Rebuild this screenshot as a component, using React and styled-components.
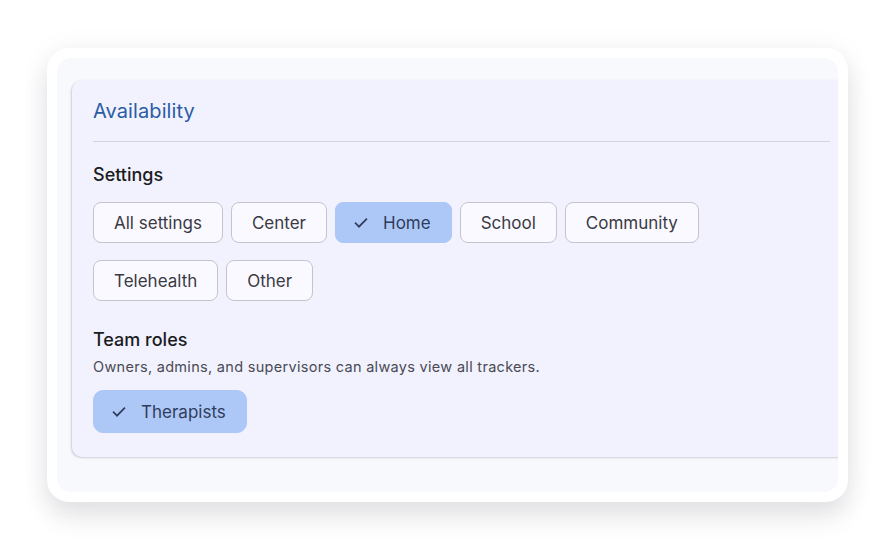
import React, { useState } from 'react';
import styled, { createGlobalStyle } from 'styled-components';

const GlobalStyle = createGlobalStyle`
  html, body {
    margin: 0;
    padding: 0;
    background: #ffffff;
    font-family: Inter, Roboto, "Liberation Sans", sans-serif;
  }
`;

const Page = styled.div`
  width: 896px;
  height: 550px;
  padding: 48px 0 0 47px;
  box-sizing: border-box;
`;

const Frame = styled.div`
  width: 801px;
  height: 454px;
  box-sizing: border-box;
  padding: 10px;
  background: #ffffff;
  border-radius: 22px;
  box-shadow: 0 16px 24px rgba(40, 40, 60, 0.1), 0 2px 30px rgba(40, 40, 60, 0.06);
`;

const Panel = styled.div`
  height: 100%;
  box-sizing: border-box;
  padding: 22px 0 0 15px;
  background: #f8f9fd;
  border-radius: 14px;
  overflow: hidden;
`;

const Card = styled.section`
  width: 790px;
  box-sizing: border-box;
  padding: 16px 0 24px 21px;
  background: #f1f2fd;
  border-radius: 10px 0 0 10px;
  box-shadow: -1px 1px 2px rgba(60, 60, 80, 0.22);
`;

const Title = styled.h2`
  margin: 0;
  font-size: 20px;
  font-weight: 400;
  letter-spacing: 0.1px;
  color: #2b5ca6;
  line-height: 30px;
`;

const Divider = styled.hr`
  margin: 15px 0 0;
  width: 737px;
  border: none;
  border-top: 1px solid #d3d3dc;
`;

const SectionLabel = styled.h3`
  margin: ${({ $top }) => $top}px 0 0;
  font-size: 18px;
  font-weight: 500;
  color: #1b1b22;
  line-height: 24px;
`;

const Hint = styled.p`
  margin: 5px 0 0;
  font-size: 14.5px;
  letter-spacing: 0.3px;
  color: #4a4a55;
  line-height: 20px;
`;

const ChipRow = styled.div`
  display: flex;
  flex-wrap: wrap;
  gap: 17px 8px;
  width: 620px;
  margin-top: ${({ $top }) => $top}px;
`;

const Chip = styled.button`
  display: flex;
  align-items: center;
  gap: 14px;
  height: ${({ $tall }) => ($tall ? 43 : 41)}px;
  box-sizing: border-box;
  padding: 0 20px 0 ${({ $selected }) => ($selected ? 17 : 20)}px;
  font-family: inherit;
  font-size: 17px;
  color: ${({ $selected }) => ($selected ? '#2f3d5c' : '#3a3a44')};
  background: ${({ $selected }) => ($selected ? '#adc8f7' : '#f9f9ff')};
  border: 1px solid ${({ $selected }) => ($selected ? '#adc8f7' : '#c4c4ce')};
  border-radius: ${({ $tall }) => ($tall ? 10 : 8)}px;
  cursor: pointer;
`;

const Check = () => (
  <svg width="16" height="16" viewBox="0 0 24 24" fill="none" stroke="#2f3d5c" strokeWidth="2.6" strokeLinecap="square">
    <path d="M4 12.5l5 5L20 6.5" />
  </svg>
);

const settings = ['All settings', 'Center', 'Home', 'School', 'Community', 'Telehealth', 'Other'];

export default function App() {
  const [picked, setPicked] = useState(['Home']);
  const [roles, setRoles] = useState(['Therapists']);

  const toggle = (list, setList, name) =>
    setList(list.includes(name) ? list.filter((x) => x !== name) : [...list, name]);

  return (
    <Page>
      <GlobalStyle />
      <Frame>
        <Panel>
          <Card>
            <Title>Availability</Title>
            <Divider />
            <SectionLabel $top={21}>Settings</SectionLabel>
            <ChipRow $top={15}>
              {settings.map((s) => (
                <Chip key={s} $selected={picked.includes(s)} onClick={() => toggle(picked, setPicked, s)}>
                  {picked.includes(s) && <Check />}
                  {s}
                </Chip>
              ))}
            </ChipRow>
            <SectionLabel $top={27}>Team roles</SectionLabel>
            <Hint>Owners, admins, and supervisors can always view all trackers.</Hint>
            <ChipRow $top={13}>
              <Chip $tall $selected={roles.includes('Therapists')} onClick={() => toggle(roles, setRoles, 'Therapists')}>
                {roles.includes('Therapists') && <Check />}
                Therapists
              </Chip>
            </ChipRow>
          </Card>
        </Panel>
      </Frame>
    </Page>
  );
}
